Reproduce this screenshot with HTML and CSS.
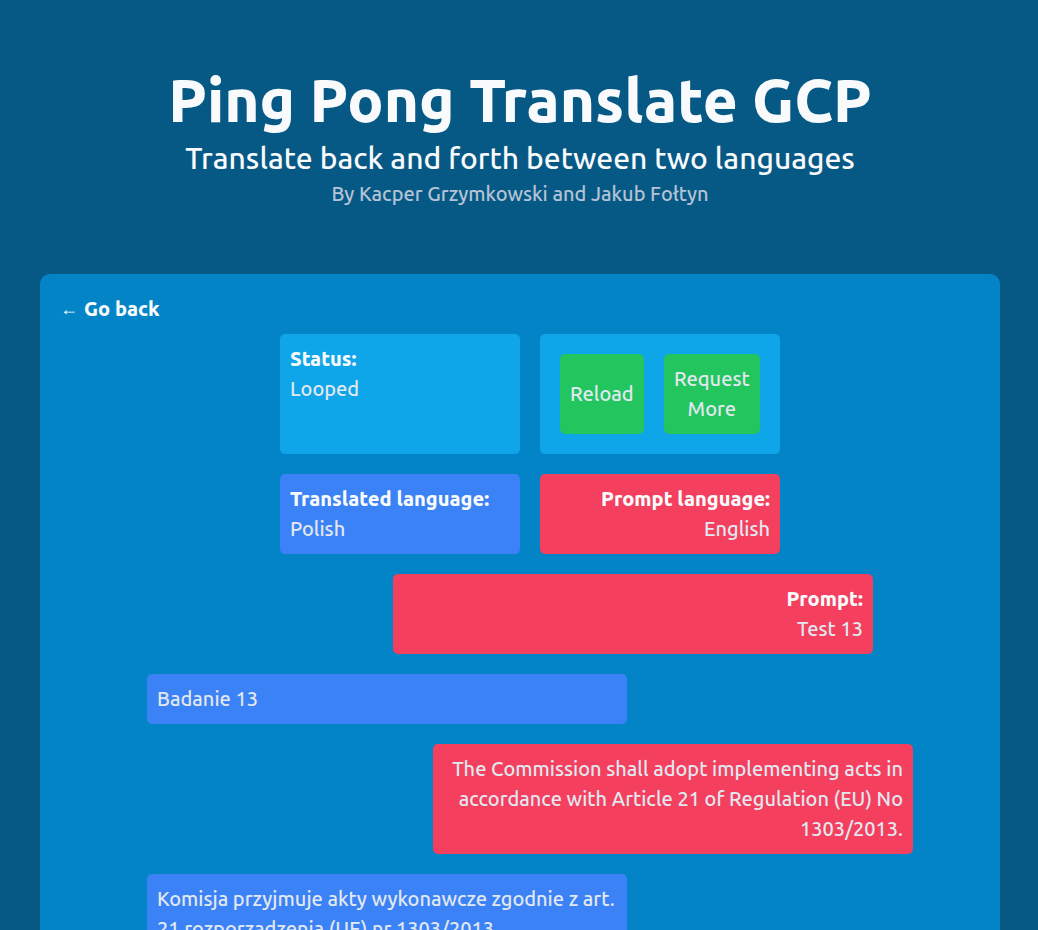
FILE: index.html
```html
<!DOCTYPE html>
<html lang="en">
<head>
<meta charset="utf-8">
<title>Ping Pong Translate GCP</title>
<link rel="stylesheet" href="styles.css">
</head>
<body>
<header class="header">
  <h1 class="title">Ping Pong Translate GCP</h1>
  <p class="subtitle">Translate back and forth between two languages</p>
  <p class="byline">By Kacper Grzymkowski and Jakub Fołtyn</p>
</header>
<main class="panel">
  <a class="back" href="#"><span class="arrow">←</span><span>Go back</span></a>
  <div class="content">
    <section class="summary">
      <div class="card info">
        <h2 class="label">Status:</h2>
        <p>Looped</p>
      </div>
      <div class="card info actions">
        <button class="button" type="button">Reload</button>
        <button class="button" type="button">Request More</button>
      </div>
      <div class="card translated">
        <h2 class="label">Translated language:</h2>
        <p>Polish</p>
      </div>
      <div class="card prompt">
        <h2 class="label">Prompt language:</h2>
        <p>English</p>
      </div>
    </section>
    <section class="messages">
      <div class="card message prompt first">
        <h2 class="label">Prompt:</h2>
        <p>Test 13</p>
      </div>
      <div class="card message translated" lang="pl">
        <p>Badanie 13</p>
      </div>
      <div class="card message prompt">
        <p>The Commission shall adopt implementing acts in accordance with Article 21 of Regulation (EU) No 1303/2013.</p>
      </div>
      <div class="card message translated" lang="pl">
        <p>Komisja przyjmuje akty wykonawcze zgodnie z art. 21 rozporządzenia (UE) nr 1303/2013.</p>
      </div>
    </section>
  </div>
</main>
</body>
</html>
```
FILE: styles.css
```css
* {
  box-sizing: border-box;
}

body {
  margin: 0;
  padding: 70px 38px 40px 40px;
  background: #075985;
  color: #e2e8f0;
  font-family: Ubuntu, "Noto Sans", sans-serif;
  font-size: 20px;
  font-weight: 500;
  line-height: 30px;
}

h1, h2, p {
  margin: 0;
}

.header {
  padding-bottom: 65px;
  text-align: center;
}

.title {
  color: #f8fafc;
  font-size: 60px;
  line-height: 60px;
  font-weight: 800;
}

.subtitle {
  padding-top: 10px;
  color: #f8fafc;
  font-size: 30px;
  line-height: 36px;
}

.byline {
  padding-top: 3px;
  color: #b4c4d6;
}

.panel {
  padding: 20px;
  border-radius: 10px;
  background: #0284c7;
}

.back {
  display: flex;
  gap: 6px;
  width: fit-content;
  color: #f8fafc;
  font-weight: 800;
  text-decoration: none;
}

.arrow {
  font-family: "Liberation Sans", sans-serif;
  font-size: 18px;
  font-weight: 400;
}

.content {
  display: flex;
  flex-direction: column;
  align-items: center;
  gap: 20px;
  padding: 10px 0 0 20px;
}

.summary {
  display: grid;
  grid-template-columns: 240px 240px;
  gap: 20px;
}

.card {
  padding: 10px;
  border-radius: 5px;
}

.label {
  color: #f8fafc;
  font-size: inherit;
  font-weight: 800;
}

.info {
  background: #0ea5e9;
}

.translated {
  background: #3b82f6;
}

.prompt {
  background: #f43f5e;
  text-align: right;
}

.actions {
  display: flex;
  gap: 20px;
  padding: 20px;
}

.button {
  padding: 10px;
  border: 0;
  border-radius: 5px;
  background: #22c55e;
  color: inherit;
  font: inherit;
  cursor: pointer;
}

.messages {
  display: flex;
  flex-direction: column;
  gap: 20px;
  width: 100%;
  max-width: 766px;
}

.message {
  width: 100%;
  max-width: 480px;
}

.message.prompt {
  align-self: flex-end;
}

.message.first {
  margin-right: 40px;
}
```
